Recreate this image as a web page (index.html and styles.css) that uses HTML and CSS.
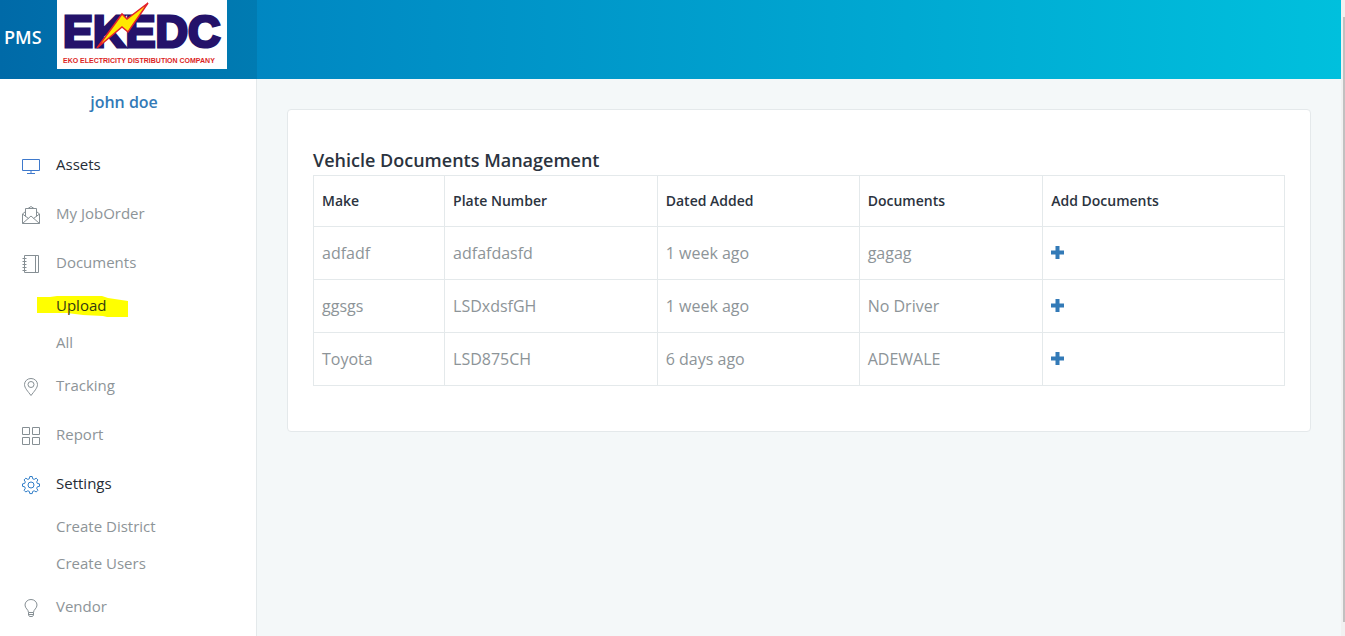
FILE: index.html
```html
<!DOCTYPE html>
<html lang="en">
<head>
<meta charset="utf-8">
<title>PMS</title>
<link rel="stylesheet" href="styles.css">
</head>
<body>
<div class="page">
  <header class="topbar">
    <div class="brand">
      <a class="brand-name" href="#">PMS</a>
      <a class="brand-logo" href="#" aria-label="EKEDC">
        <svg width="170" height="69" viewBox="0 0 170 69">
          <rect width="170" height="69" fill="#fff"/>
          <text class="logo-main" x="6" y="47">EKEDC</text>
          <path d="M91 3 70 19 65 14 57 25 40 48 65 27 71 32z" fill="#ffe800" stroke="#e3202b" stroke-width="1.500"/>
          <text class="logo-sub" x="6" y="63">EKO ELECTRICITY DISTRIBUTION COMPANY</text>
        </svg>
      </a>
    </div>
  </header>
  <aside class="sidebar">
    <a class="user" href="#">john doe</a>
    <nav class="nav">
      <a class="item active" href="#"><svg class="icon icon-violet" viewBox="0 0 20 20"><path d="M1.500 3.500h17v11h-17zM10 14.500v3M6 17.500h8"/></svg>Assets</a>
      <a class="item" href="#"><svg class="icon" viewBox="0 0 20 20"><path d="M4.500 6.500 1.500 9v9.500h17V9l-3-2.500M4.500 11.500v-8h11v8M7 3.500l3-2 3 2M1.500 9l6 4.500M18.500 9l-6 4.500M1.500 18.500 10 11l8.500 7.500"/></svg>My JobOrder</a>
      <a class="item" href="#"><svg class="icon" viewBox="0 0 20 20"><path d="M3.500 1.500h14v17h-14zM14.500 1.500v17M1.500 4.500h4M1.500 7.500h4M1.500 10.500h4M1.500 13.500h4M1.500 16.500h4"/></svg>Documents</a>
      <a class="subitem marked" href="#">
        <svg class="marker" width="91" height="22" viewBox="0 0 91 22"><path d="M0 1 13 1 20 0h45l6 2 20 3v16H70l-4-1-20-1-8-1-8-1H0z" fill="#ff0"/></svg>
        <span class="marked-text">Upload</span></a>
      <a class="subitem" href="#">All</a>
      <a class="item" href="#"><svg class="icon" viewBox="0 0 20 20"><path d="M10 18.500C7 14.500 3.500 11 3.500 7.500a6.500 6 0 0 1 13 0c0 3.500-3.500 7-6.500 11z"/><circle cx="10" cy="7.500" r="3"/></svg>Tracking</a>
      <a class="item" href="#"><svg class="icon" viewBox="0 0 20 20"><path d="M1.500 1.500h7v7h-7zM11.500 1.500h7v7h-7zM1.500 11.500h7v7h-7zM11.500 11.500h7v7h-7z"/></svg>Report</a>
      <a class="item active" href="#"><svg class="icon icon-blue" viewBox="0 0 20 20"><path d="M8.800 1.500h2.400l.5 2.300 1.500.6 2-1.200 1.700 1.700-1.200 2 .6 1.500 2.200.5v2.400l-2.200.5-.6 1.500 1.200 2-1.700 1.700-2-1.200-1.500.6-.5 2.200H8.800l-.5-2.200-1.500-.6-2 1.200-1.700-1.700 1.200-2-.6-1.500-2.200-.5V8.900l2.200-.5.6-1.500-1.200-2 1.700-1.700 2 1.200 1.500-.6z"/><circle cx="10" cy="10" r="3"/></svg>Settings</a>
      <a class="subitem" href="#">Create District</a>
      <a class="subitem" href="#">Create Users</a>
      <a class="item" href="#"><svg class="icon" viewBox="0 0 20 20"><path d="M7.500 14.500c0-3-3.500-4-3.500-7.500a6 5.500 0 0 1 12 0c0 3.500-3.500 4.500-3.500 7.500zM7.500 14.500v2.500l1 1.500h3l1-1.500v-2.500M7.500 16.500h5"/></svg>Vendor</a>
    </nav>
  </aside>
  <main class="main">
    <section class="card">
      <h1 class="title">Vehicle Documents Management</h1>
      <table class="table">
        <colgroup><col class="c-make"><col class="c-plate"><col class="c-date"><col class="c-docs"><col></colgroup>
        <thead><tr><th>Make</th><th>Plate Number</th><th>Dated Added</th><th>Documents</th><th>Add Documents</th></tr></thead>
        <tbody>
          <tr><td>adfadf</td><td>adfafdasfd</td><td>1 week ago</td><td>gagag</td><td><a href="#" aria-label="Add documents"><svg class="plus" viewBox="0 0 13 13"><path d="M4.500 0h4v4.500H13v4H8.500V13h-4V8.500H0v-4h4.500z"/></svg></a></td></tr>
          <tr><td>ggsgs</td><td>LSDxdsfGH</td><td>1 week ago</td><td>No Driver</td><td><a href="#" aria-label="Add documents"><svg class="plus" viewBox="0 0 13 13"><path d="M4.500 0h4v4.500H13v4H8.500V13h-4V8.500H0v-4h4.500z"/></svg></a></td></tr>
          <tr><td>Toyota</td><td>LSD875CH</td><td>6 days ago</td><td>ADEWALE</td><td><a href="#" aria-label="Add documents"><svg class="plus" viewBox="0 0 13 13"><path d="M4.500 0h4v4.500H13v4H8.500V13h-4V8.500H0v-4h4.500z"/></svg></a></td></tr>
        </tbody>
      </table>
    </section>
  </main>
  <div class="scroll"><div class="thumb"></div></div>
</div>
</body>
</html>
```
FILE: styles.css
```css
* { box-sizing: border-box; }
body { margin: 0; font-family: "Open Sans", "Noto Sans", sans-serif; font-size: 16px; color: #8d9498; background: #f4f8f9; }
a { color: inherit; text-decoration: none; }
.page { display: grid; grid-template-columns: 257px 1fr 4px; grid-template-rows: 79px 1fr; min-height: 100vh; }
.topbar { grid-column: 1 / 3; background: linear-gradient(to right, #0079bb, #00c0dd); display: flex; }
.brand { width: 257px; display: flex; align-items: flex-start; justify-content: space-between; padding: 0 30px 0 4px; background: linear-gradient(to right, #006aa8, #007bb2); }
.brand-name { color: #fff; font-size: 18px; font-weight: 600; line-height: 75px; }
.brand-logo { display: flex; }
.logo-main { font: bold 45px "Liberation Sans", sans-serif; fill: #24126a; stroke: #24126a; stroke-width: 3px; }
.logo-sub { font: bold 7px "Liberation Sans", sans-serif; fill: #dc1f26; }
.sidebar { background: #fff; border-right: 1px solid #e4e9eb; }
.user { display: block; padding: 12px 8px 0 0; height: 61px; text-align: center; font-size: 16px; font-weight: 600; line-height: 22px; color: #337ab7; }
.nav { display: flex; flex-direction: column; font-size: 15px; }
.item { display: flex; align-items: center; gap: 15px; height: 49px; padding: 0 0 2px 21px; }
.item.active { color: #252c35; }
.icon { width: 20px; height: 20px; margin-top: 4px; fill: none; stroke: #868f94; }
.icon-violet { stroke: #3e79cc; }
.icon-blue { stroke: #2f7dc8; }
.subitem { height: 37px; padding-left: 56px; line-height: 37px; }
.marked { position: relative; color: #333a10; }
.marker { position: absolute; left: 37px; top: 9px; }
.marked-text { position: relative; }
.main { padding: 30px; }
.card { background: #fff; border: 1px solid #e4e9eb; border-radius: 4px; padding: 40px 25px 45px; }
.title { margin: 0 0 5px; font-size: 18px; font-weight: 600; line-height: 20px; color: #2b333e; }
.table { width: 100%; border-collapse: collapse; table-layout: fixed; }
.table th, .table td { border: 1px solid #e4e9eb; padding: 0 8px; text-align: left; }
.table th { height: 51px; padding-bottom: 2px; font-size: 14px; font-weight: 600; color: #2b333e; }
.table td { height: 53px; font-size: 16px; }
.table td:last-child { padding-bottom: 2px; }
.c-make { width: 13.5%; }
.c-plate { width: 21.9%; }
.c-date { width: 20.8%; }
.c-docs { width: 18.9%; }
.plus { display: block; width: 13px; height: 13px; fill: #337ab7; }
.scroll { grid-column: 3; grid-row: 1 / 3; background: #f1f1f1; padding: 17px 0 14px 2px; display: flex; }
.thumb { flex: 1; background: #c1c1c1; }
```
